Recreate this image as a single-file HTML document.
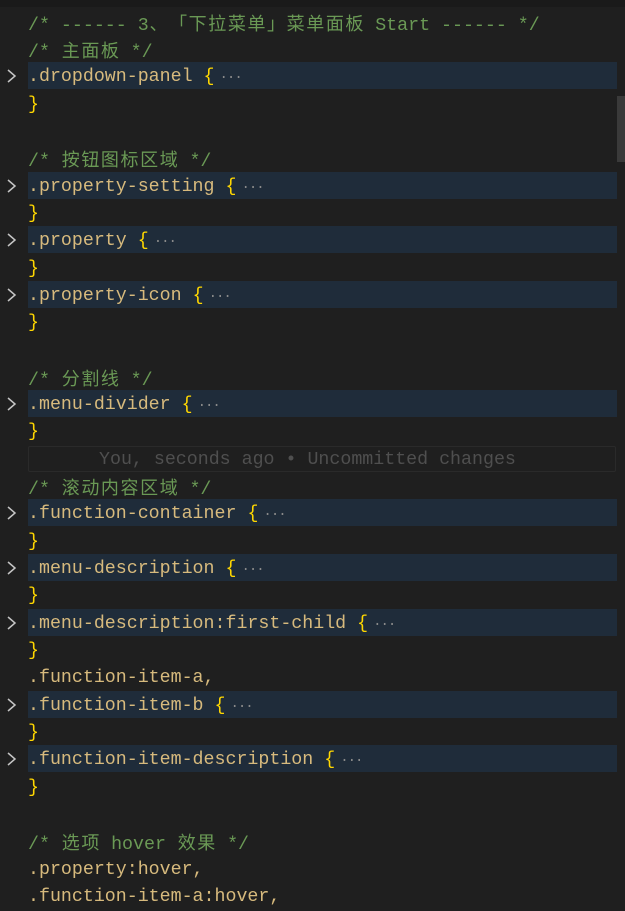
<!DOCTYPE html>
<html><head><meta charset="utf-8"><style>
html,body{margin:0;padding:0}
body{width:625px;height:911px;overflow:hidden;background:#1f1f1f;position:relative;font-family:"Liberation Mono","Noto Sans CJK SC",monospace;font-size:18.3px;}
.top{position:absolute;left:0;top:0;width:625px;height:7px;background:#1a1a1a}
.r{position:absolute;left:0;width:625px;height:27.33px;line-height:27.33px;white-space:pre}
.t{position:absolute;left:28px;top:3px}
.hl{position:absolute;left:28px;top:1px;width:589px;height:27px;background:#1f2c3a}
.ch{position:absolute;left:6px;top:8px}
.g{color:#6a9955}.s{color:#d7ba7d}.b{color:#ffd700}.e{color:#8a8a8a;font-size:14px;display:inline-block;margin-left:5px;letter-spacing:-1px}
.c{display:inline-block;width:19.6px;text-align:center;font-family:"Noto Sans CJK SC",sans-serif;font-size:18px}
.sb{position:absolute;left:617px;top:96px;width:8px;height:66px;background:#3a3a3a}
.blame{position:absolute;left:28px;width:588px;height:26px;border:1px solid #2a2a2a;border-radius:2px;color:#4f4f4f;box-sizing:border-box}
</style></head><body>
<div class="top"></div>
<div class="r" style="top:6.5px"><span class="t g">/* ------ 3<span class="c">、</span><span class="c">「</span><span class="c">下</span><span class="c">拉</span><span class="c">菜</span><span class="c">单</span><span class="c">」</span><span class="c">菜</span><span class="c">单</span><span class="c">面</span><span class="c">板</span> Start ------ */</span></div>
<div class="r" style="top:33.8px"><span class="t g">/* <span class="c">主</span><span class="c">面</span><span class="c">板</span> */</span></div>
<div class="r" style="top:61.2px"><div class="hl"></div><svg class="ch" width="12" height="14"><path d="M2 1l7 6-7 6" fill="none" stroke="#c5c5c5" stroke-width="1.5"/></svg><span class="t"><span class="s">.dropdown-panel</span> <span class="b">{</span><span class="e">···</span></span></div>
<div class="r" style="top:88.5px"><span class="t b">}</span></div>
<div class="r" style="top:143.2px"><span class="t g">/* <span class="c">按</span><span class="c">钮</span><span class="c">图</span><span class="c">标</span><span class="c">区</span><span class="c">域</span> */</span></div>
<div class="r" style="top:170.5px"><div class="hl"></div><svg class="ch" width="12" height="14"><path d="M2 1l7 6-7 6" fill="none" stroke="#c5c5c5" stroke-width="1.5"/></svg><span class="t"><span class="s">.property-setting</span> <span class="b">{</span><span class="e">···</span></span></div>
<div class="r" style="top:197.8px"><span class="t b">}</span></div>
<div class="r" style="top:225.2px"><div class="hl"></div><svg class="ch" width="12" height="14"><path d="M2 1l7 6-7 6" fill="none" stroke="#c5c5c5" stroke-width="1.5"/></svg><span class="t"><span class="s">.property</span> <span class="b">{</span><span class="e">···</span></span></div>
<div class="r" style="top:252.5px"><span class="t b">}</span></div>
<div class="r" style="top:279.8px"><div class="hl"></div><svg class="ch" width="12" height="14"><path d="M2 1l7 6-7 6" fill="none" stroke="#c5c5c5" stroke-width="1.5"/></svg><span class="t"><span class="s">.property-icon</span> <span class="b">{</span><span class="e">···</span></span></div>
<div class="r" style="top:307.1px"><span class="t b">}</span></div>
<div class="r" style="top:361.8px"><span class="t g">/* <span class="c">分</span><span class="c">割</span><span class="c">线</span> */</span></div>
<div class="r" style="top:389.1px"><div class="hl"></div><svg class="ch" width="12" height="14"><path d="M2 1l7 6-7 6" fill="none" stroke="#c5c5c5" stroke-width="1.5"/></svg><span class="t"><span class="s">.menu-divider</span> <span class="b">{</span><span class="e">···</span></span></div>
<div class="r" style="top:416.4px"><span class="t b">}</span></div>
<div class="r" style="top:443.8px"><div class="blame" style="top:2px;line-height:26px"><span style="position:absolute;left:70px">You, seconds ago • Uncommitted changes</span></div></div>
<div class="r" style="top:471.1px"><span class="t g">/* <span class="c">滚</span><span class="c">动</span><span class="c">内</span><span class="c">容</span><span class="c">区</span><span class="c">域</span> */</span></div>
<div class="r" style="top:498.4px"><div class="hl"></div><svg class="ch" width="12" height="14"><path d="M2 1l7 6-7 6" fill="none" stroke="#c5c5c5" stroke-width="1.5"/></svg><span class="t"><span class="s">.function-container</span> <span class="b">{</span><span class="e">···</span></span></div>
<div class="r" style="top:525.8px"><span class="t b">}</span></div>
<div class="r" style="top:553.1px"><div class="hl"></div><svg class="ch" width="12" height="14"><path d="M2 1l7 6-7 6" fill="none" stroke="#c5c5c5" stroke-width="1.5"/></svg><span class="t"><span class="s">.menu-description</span> <span class="b">{</span><span class="e">···</span></span></div>
<div class="r" style="top:580.4px"><span class="t b">}</span></div>
<div class="r" style="top:607.8px"><div class="hl"></div><svg class="ch" width="12" height="14"><path d="M2 1l7 6-7 6" fill="none" stroke="#c5c5c5" stroke-width="1.5"/></svg><span class="t"><span class="s">.menu-description:first-child</span> <span class="b">{</span><span class="e">···</span></span></div>
<div class="r" style="top:635.1px"><span class="t b">}</span></div>
<div class="r" style="top:662.4px"><span class="t s">.function-item-a,</span></div>
<div class="r" style="top:689.7px"><div class="hl"></div><svg class="ch" width="12" height="14"><path d="M2 1l7 6-7 6" fill="none" stroke="#c5c5c5" stroke-width="1.5"/></svg><span class="t"><span class="s">.function-item-b</span> <span class="b">{</span><span class="e">···</span></span></div>
<div class="r" style="top:717.1px"><span class="t b">}</span></div>
<div class="r" style="top:744.4px"><div class="hl"></div><svg class="ch" width="12" height="14"><path d="M2 1l7 6-7 6" fill="none" stroke="#c5c5c5" stroke-width="1.5"/></svg><span class="t"><span class="s">.function-item-description</span> <span class="b">{</span><span class="e">···</span></span></div>
<div class="r" style="top:771.7px"><span class="t b">}</span></div>
<div class="r" style="top:826.4px"><span class="t g">/* <span class="c">选</span><span class="c">项</span> hover <span class="c">效</span><span class="c">果</span> */</span></div>
<div class="r" style="top:853.7px"><span class="t s">.property:hover,</span></div>
<div class="r" style="top:881px"><span class="t s">.function-item-a:hover,</span></div>
<div class="sb"></div>
</body></html>
